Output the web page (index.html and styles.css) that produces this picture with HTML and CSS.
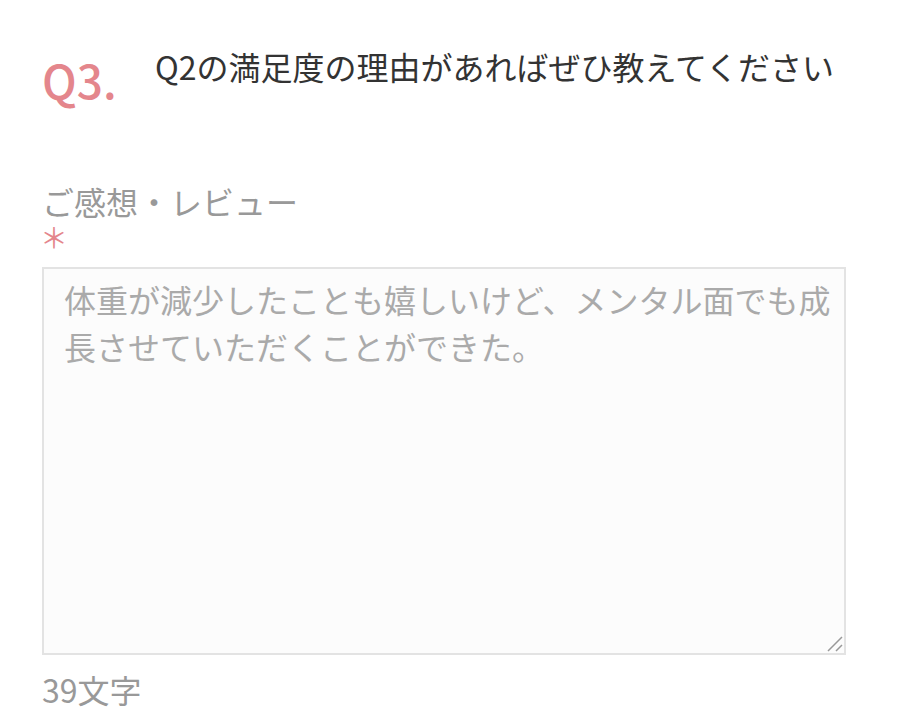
FILE: index.html
```html
<!DOCTYPE html>
<html lang="ja">
<head>
  <meta charset="UTF-8">
  <meta name="viewport" content="width=device-width, initial-scale=1.0">
  <title>アンケート Q3</title>
  <link rel="stylesheet" href="styles.css">
</head>
<body>
  <div class="question">
    <span class="q-num">Q3.</span>
    <h2 class="q-text">Q2の満足度の理由があればぜひ教えてください</h2>
  </div>

  <div class="field">
    <label class="field-label" for="review">ご感想・レビュー</label>
    <span class="required">＊</span>
    <textarea id="review" class="review-box" placeholder="体重が減少したことも嬉しいけど、メンタル面でも成長させていただくことができた。"></textarea>
    <p class="char-count">39文字</p>
  </div>
</body>
</html>
```

FILE: styles.css
```css
body {
  font-family: "Noto Sans CJK JP", "Noto Sans", sans-serif;
  margin: 0;
  padding: 0 52px 0 42px;
  background-color: #fff;
}
.question {
  display: flex;
  align-items: flex-start;
  padding-top: 45px;
}
.q-num {
  color: #e4868c;
  font-size: 46px;
  font-weight: 500;
  line-height: 72px;
  width: 113px;
  flex-shrink: 0;
  margin-top: -2px;
}
.q-text {
  margin: 0;
  font-size: 32px;
  font-weight: normal;
  color: #333;
  line-height: 46px;
  margin-top: -2px;
}
.field {
  margin-top: 68px;
}
.field-label {
  display: block;
  color: #999;
  font-size: 32px;
  line-height: 36px;
}
.required {
  display: block;
  color: #e4868c;
  font-size: 28px;
  line-height: 20px;
  padding-top: 8px;
  height: 40px;
  margin-left: -2px;
}
.review-box {
  display: block;
  box-sizing: border-box;
  width: 100%;
  height: 388px;
  margin: 0;
  padding: 7px 4px 5px 20px;
  border: 2px solid #e3e3e3;
  background: #fcfcfc url("data:image/svg+xml,%3Csvg xmlns='http://www.w3.org/2000/svg' width='16' height='16'%3E%3Cpath d='M1 15 L15 1 M9 15 L15 9' stroke='%23999' stroke-width='1.5'/%3E%3C/svg%3E") no-repeat right 1px bottom 1px;
  font-family: inherit;
  font-size: 32px;
  line-height: 47px;
  color: #333;
  resize: none;
}
.review-box::placeholder {
  color: #aaa;
}
.char-count {
  margin: 11px 0 0;
  color: #999;
  font-size: 32px;
  line-height: 46px;
}
```
